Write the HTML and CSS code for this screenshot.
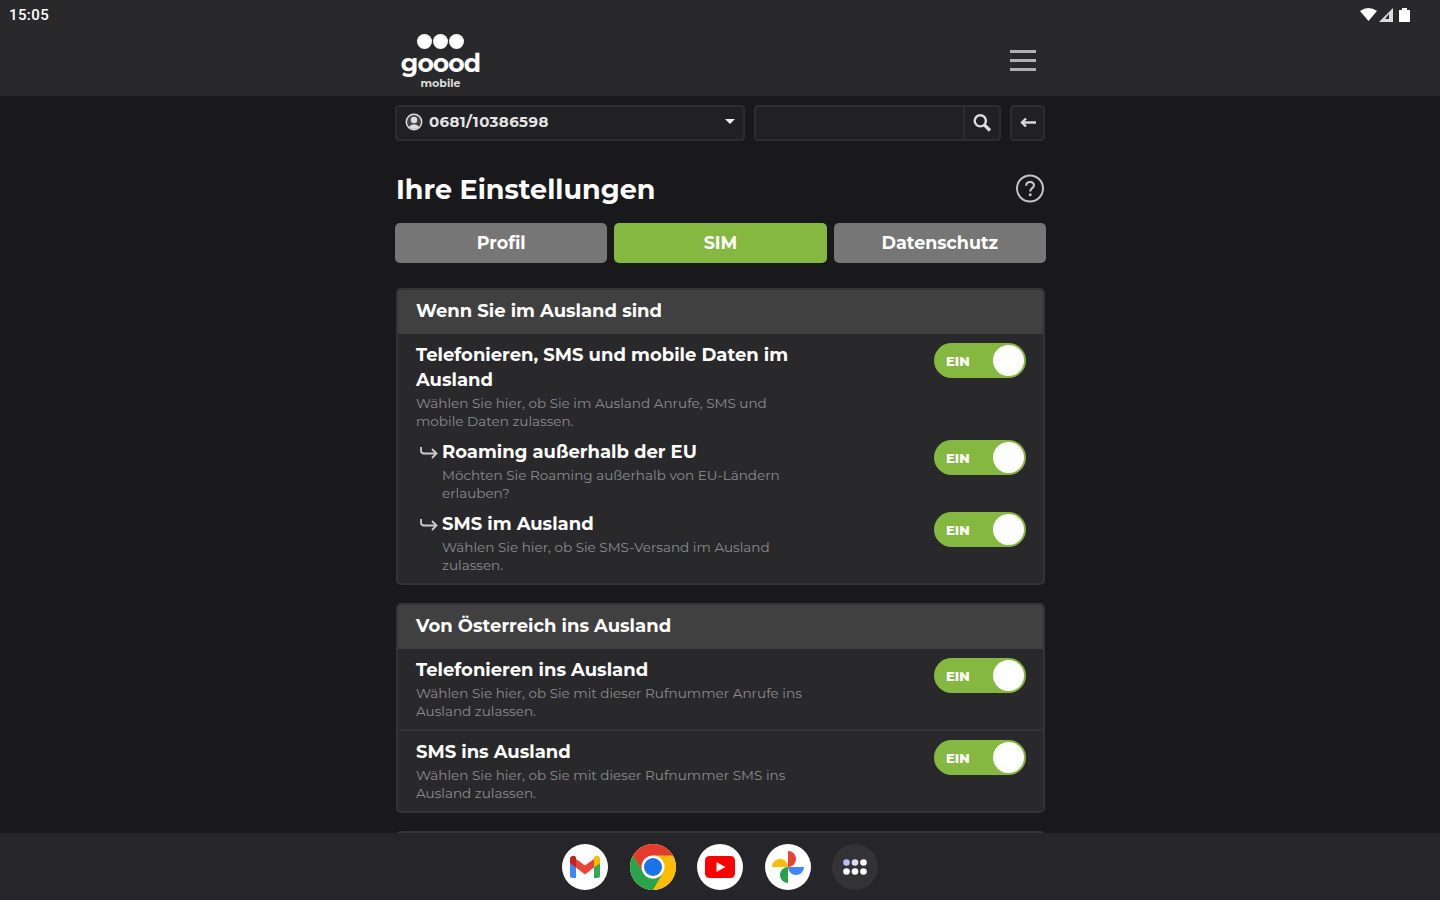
FILE: index.html
```html
<!DOCTYPE html>
<html lang="de">
<head>
    <meta charset="UTF-8">
    <meta name="viewport" content="width=device-width, initial-scale=1.0">
    <title>goood mobile</title>
    <link rel="stylesheet" href="styles.css">
</head>
<body>

    <header class="top">
        <div class="status">
            <span class="time">15:05</span>
            <svg class="status-icons" width="52" height="16" viewBox="0 0 52 16" fill="#fff">
                <path d="M0 4 Q8.500 -2 17 4 L8.500 14 Z"/>
                <path d="M33 1 V15 H19 Z" fill="#ddd"/>
                <path d="M29 7 V12 H25 Z" fill="#29292b"/>
                <path d="M39 3 H42 V1 H47 V3 H50 V15 H39 Z"/>
            </svg>
        </div>
        <div class="wrap brand">
            <div class="logo">
                <div class="dots"><i></i><i></i><i></i></div>
                <span class="logo-name">goood</span>
                <span class="logo-sub">mobile</span>
            </div>
            <div class="burger"><i></i><i></i><i></i></div>
        </div>
    </header>

    <main class="wrap content">
        <div class="controls">
            <div class="box number">
                <svg width="18" height="18" viewBox="0 0 18 18">
                    <circle cx="9" cy="9" r="7.700" fill="#444446" stroke="#ddd" stroke-width="1.500"/>
                    <circle cx="9" cy="7" r="3.200" fill="#ddd"/>
                    <path d="M3.500 14 Q9 8.500 14.500 14 Q9 18 3.500 14 Z" fill="#ddd"/>
                </svg>
                <span class="phone">0681/10386598</span>
                <span class="caret"></span>
            </div>
            <div class="box search">
                <div class="search-field"></div>
                <div class="search-btn">
                    <svg width="20" height="20" viewBox="0 0 20 20" fill="none" stroke="#ddd">
                        <circle cx="8.300" cy="7.800" r="5.600" stroke-width="2.400"/>
                        <path d="M12.500 12 L18 17.500" stroke-width="3.200"/>
                    </svg>
                </div>
            </div>
            <div class="box back">
                <svg width="18" height="14" viewBox="0 0 18 14" fill="none" stroke="#ddd" stroke-width="2.400">
                    <path d="M17 6.500 H3"/>
                    <path d="M7 2.500 L3 6.500 L7 10.500"/>
                </svg>
            </div>
        </div>

        <div class="title-row">
            <h1>Ihre Einstellungen</h1>
            <svg width="30" height="30" viewBox="0 0 30 30" fill="none" stroke="#c4c4c4">
                <circle cx="15" cy="14.500" r="13" stroke-width="2"/>
                <path d="M11.200 11.700 C11.200 6.800 19 6.800 19 11.300 C19 14.300 15.200 14.100 15.200 17.500" stroke-width="2.200"/>
                <circle cx="15.200" cy="20.800" r="1.500" fill="#c4c4c4" stroke="none"/>
            </svg>
        </div>

        <nav class="tabs">
            <a class="tab">Profil</a>
            <a class="tab active">SIM</a>
            <a class="tab">Datenschutz</a>
        </nav>

        <section class="card">
            <h2>Wenn Sie im Ausland sind</h2>
            <div class="row">
                <div class="text">
                    <h3>Telefonieren, SMS und mobile Daten im<br>Ausland</h3>
                    <p>Wählen Sie hier, ob Sie im Ausland Anrufe, SMS und<br>mobile Daten zulassen.</p>
                </div>
                <div class="toggle"><span>EIN</span><i></i></div>
            </div>
            <div class="row sub">
                <svg class="sub-arrow" width="18" height="14" viewBox="0 0 18 14" fill="none" stroke="#ccc" stroke-width="1.800">
                    <path d="M1 0 V3.500 Q1 6.500 4 6.500 H16"/>
                    <path d="M12 2 L16.500 6.500 L12 11"/>
                </svg>
                <div class="text">
                    <h3>Roaming außerhalb der EU</h3>
                    <p>Möchten Sie Roaming außerhalb von EU-Ländern<br>erlauben?</p>
                </div>
                <div class="toggle"><span>EIN</span><i></i></div>
            </div>
            <div class="row sub">
                <svg class="sub-arrow" width="18" height="14" viewBox="0 0 18 14" fill="none" stroke="#ccc" stroke-width="1.800">
                    <path d="M1 0 V3.500 Q1 6.500 4 6.500 H16"/>
                    <path d="M12 2 L16.500 6.500 L12 11"/>
                </svg>
                <div class="text">
                    <h3>SMS im Ausland</h3>
                    <p>Wählen Sie hier, ob Sie SMS-Versand im Ausland<br>zulassen.</p>
                </div>
                <div class="toggle"><span>EIN</span><i></i></div>
            </div>
        </section>

        <section class="card">
            <h2>Von Österreich ins Ausland</h2>
            <div class="row">
                <div class="text">
                    <h3>Telefonieren ins Ausland</h3>
                    <p>Wählen Sie hier, ob Sie mit dieser Rufnummer Anrufe ins<br>Ausland zulassen.</p>
                </div>
                <div class="toggle"><span>EIN</span><i></i></div>
            </div>
            <div class="row line">
                <div class="text">
                    <h3>SMS ins Ausland</h3>
                    <p>Wählen Sie hier, ob Sie mit dieser Rufnummer SMS ins<br>Ausland zulassen.</p>
                </div>
                <div class="toggle"><span>EIN</span><i></i></div>
            </div>
        </section>

        <section class="card next"></section>
    </main>

    <footer class="dock">
        <div class="app">
            <svg width="46" height="46" viewBox="0 0 46 46">
                <path d="M8 14 L14 18.500 V34 H10.500 Q8 34 8 31.500 Z" fill="#4285f4"/>
                <path d="M38 14 L32 18.500 V34 H35.500 Q38 34 38 31.500 Z" fill="#34a853"/>
                <path d="M14 15 L23 21.500 L32 15 V23.500 L23 30.500 L14 23.500 Z" fill="#ea4335"/>
                <path d="M8 19 V15.500 C8 11.500 11.500 10.800 14 13 V23.500 Z" fill="#c5221f"/>
                <path d="M38 19 V15.500 C38 11.500 34.500 10.800 32 13 V23.500 Z" fill="#fbbc04"/>
            </svg>
        </div>
        <div class="app">
            <svg width="46" height="46" viewBox="0 0 46 46">
                <circle cx="23" cy="23" r="23" fill="#fbbc05"/>
                <path d="M23 11.500 H42.900 A23 23 0 0 0 3.100 11.500 L13 28.750 Z" fill="#e33b2e"/>
                <path d="M3.100 11.500 A23 23 0 0 0 23 46 L33 28.750 L23 34.500 L13 28.750 Z" fill="#2ba24c"/>
                <circle cx="23" cy="23" r="11.500" fill="#fff"/>
                <circle cx="23" cy="23" r="9" fill="#1a73e8"/>
            </svg>
        </div>
        <div class="app">
            <svg width="46" height="46" viewBox="0 0 46 46">
                <rect x="8" y="12" width="30" height="22" rx="4.500" fill="#f00"/>
                <path d="M19.500 18 L28.500 23 L19.500 28 Z" fill="#fff"/>
            </svg>
        </div>
        <div class="app">
            <svg width="46" height="46" viewBox="0 0 46 46">
                <path d="M23 7 A8 8 0 0 1 23 23 Z" fill="#ea4335"/>
                <path d="M39 23 A8 8 0 0 1 23 23 Z" fill="#4285f4"/>
                <path d="M23 39 A8 8 0 0 1 23 23 Z" fill="#22a24a"/>
                <path d="M7 23 A8 8 0 0 1 23 23 Z" fill="#fbbc04"/>
            </svg>
        </div>
        <div class="app all">
            <svg width="46" height="46" viewBox="0 0 46 46" fill="#fff">
                <circle cx="14.500" cy="18.500" r="3.300" fill="#b9bdf5"/>
                <circle cx="23" cy="18.500" r="3.300" fill="#dcdef8"/>
                <circle cx="31.500" cy="18.500" r="3.300"/>
                <circle cx="14.500" cy="27.500" r="3.300"/>
                <circle cx="23" cy="27.500" r="3.300"/>
                <circle cx="31.500" cy="27.500" r="3.300"/>
            </svg>
        </div>
    </footer>

</body>
</html>
```
FILE: styles.css
```css
* {
    box-sizing: border-box;
}
body {
    margin: 0;
    height: 100vh;
    display: flex;
    flex-direction: column;
    overflow: hidden;
    background: #19191b;
    color: #fff;
    font-family: Montserrat, Inter, "Open Sans", sans-serif;
}
h1, h2, h3, p {
    margin: 0;
    white-space: nowrap;
}
svg {
    display: block;
    flex: none;
}
.wrap {
    width: 650px;
    margin: 0 auto;
}

.top {
    height: 96px;
    flex: none;
    background: #29292b;
}
.status {
    height: 30px;
    padding: 0 28px 0 9px;
    display: flex;
    justify-content: space-between;
    align-items: center;
}
.time {
    font: 500 15px Roboto, sans-serif;
    letter-spacing: 0.4px;
}
.brand {
    display: flex;
    justify-content: space-between;
    padding: 4px 9px 0 6px;
}
.logo {
    width: 79px;
    display: flex;
    flex-direction: column;
    align-items: center;
}
.dots {
    display: flex;
    gap: 1px;
}
.dots i {
    width: 15px;
    height: 15px;
    border-radius: 50%;
    background: #fff;
}
.logo-name {
    font-size: 25px;
    font-weight: 700;
    line-height: 28px;
    letter-spacing: -0.9px;
}
.logo-sub {
    font-size: 11px;
    font-weight: 700;
    line-height: 13px;
    color: #ddd;
}
.burger {
    display: flex;
    flex-direction: column;
    gap: 6px;
    padding-top: 16px;
}
.burger i {
    width: 26px;
    height: 3px;
    background: #b0b0b1;
}

.content {
    flex: 1;
    min-height: 0;
    padding-top: 9px;
}
.controls {
    display: flex;
    gap: 9px;
}
.box {
    height: 36px;
    border: 2px solid #2d2d2f;
    border-radius: 4px;
    background: #212123;
    display: flex;
    align-items: center;
}
.number {
    width: 350px;
    padding: 0 8px 3px 8px;
}
.phone {
    flex: 1;
    margin-left: 6px;
    font-size: 15px;
    font-weight: 700;
    letter-spacing: 0.4px;
    color: #e4e4e4;
}
.caret {
    border: 5px solid transparent;
    border-top-color: #eee;
    border-bottom: 0;
}
.search {
    width: 247px;
    align-items: stretch;
}
.search-field {
    flex: 1;
}
.search-btn {
    width: 36px;
    border-left: 2px solid #2d2d2f;
    display: flex;
    align-items: center;
    justify-content: center;
}
.back {
    width: 35px;
    justify-content: center;
}

.title-row {
    height: 82px;
    padding: 14px 0 0 1px;
    display: flex;
    justify-content: space-between;
    align-items: center;
}
h1 {
    font-size: 27px;
    font-weight: 700;
}
.tabs {
    display: grid;
    grid-template-columns: repeat(3, 1fr);
    gap: 7px;
    margin: 0 -1px 25px 0;
}
.tab {
    height: 40px;
    border-radius: 5px;
    background: #767676;
    font-size: 17.500px;
    font-weight: 700;
    line-height: 40px;
    text-align: center;
}
.active {
    background: #84b840;
}

.card {
    margin: 0 0 18px 1px;
    padding-bottom: 9px;
    border: 2px solid #343436;
    border-radius: 5px;
    background: #29292b;
    overflow: hidden;
}
.card h2 {
    height: 44px;
    padding-left: 18px;
    background: #404040;
    font-size: 18px;
    font-weight: 700;
    line-height: 42px;
}
.row {
    display: flex;
    padding: 9px 17px 0 18px;
}
.sub {
    padding: 10px 17px 0 22px;
}
.text {
    flex: 1;
}
h3 {
    font-size: 18px;
    font-weight: 700;
    line-height: 25px;
}
p {
    padding-top: 1px;
    font-size: 13.550px;
    line-height: 18px;
    color: #8c8c8e;
}
.sub-arrow {
    margin: 7px 4px 0 0;
}
.line {
    margin-top: 9px;
    border-top: 2px solid #343436;
}
.toggle {
    width: 92px;
    height: 35px;
    padding: 0 2px 0 12px;
    border-radius: 18px;
    background: #84b840;
    display: flex;
    justify-content: space-between;
    align-items: center;
}
.toggle span {
    font-size: 13px;
    font-weight: 800;
}
.toggle i {
    width: 31px;
    height: 31px;
    border-radius: 50%;
    background: #fff;
}
.next {
    height: 60px;
}

.dock {
    height: 67px;
    flex: none;
    display: flex;
    justify-content: center;
    align-items: center;
    gap: 21.500px;
    background: #26262a;
}
.app {
    width: 46px;
    height: 46px;
    border-radius: 50%;
    background: #fff;
}
.all {
    background: #333337;
}
```
